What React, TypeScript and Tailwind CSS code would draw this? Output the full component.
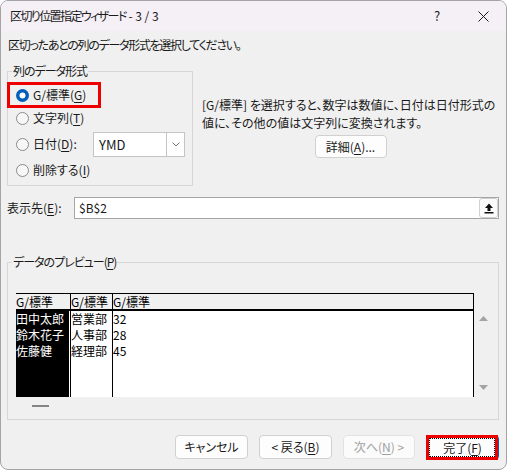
import React from 'react';

const Radio = ({ on }: { on?: boolean }) =>
  on ? (
    <svg width="13" height="13" viewBox="0 0 13 13" className="shrink-0">
      <circle cx="6.5" cy="6.5" r="6.5" fill="#005fb8" />
      <circle cx="6.5" cy="6.5" r="3" fill="#fff" />
    </svg>
  ) : (
    <svg width="13" height="13" viewBox="0 0 13 13" className="shrink-0">
      <circle cx="6.5" cy="6.5" r="6" fill="#f7f7f7" stroke="#8a8a8a" />
    </svg>
  );

const U = ({ children }: { children: React.ReactNode }) => (
  <span className="underline underline-offset-[2px]">{children}</span>
);

const App = () => {
  return (
    <div className="w-[507px] h-[470px] bg-white">
      <div className="w-[507px] h-[470px] flex flex-col overflow-hidden rounded-[8px] border border-[#a4a4a4] bg-[#f0f0f0] text-[12px] text-[#1a1a1a] font-['Noto_Sans_CJK_JP',sans-serif] [font-feature-settings:'palt']">
        {/* title bar */}
        <div className="h-[30px] shrink-0 flex items-center bg-[#f5eff6] pl-[9px]">
          <span className="leading-[16px] whitespace-pre">
            <span className="tracking-[-1.6px]">区切り位置指定ウィザード</span> - 3 / 3
          </span>
          <span className="ml-auto w-[46px] text-center text-[13px] leading-[16px]">?</span>
          <span className="w-[46px] flex justify-center">
            <svg width="11" height="11" viewBox="0 0 11 11">
              <path d="M0.5 0.5 L10.5 10.5 M10.5 0.5 L0.5 10.5" stroke="#1a1a1a" strokeWidth="1" />
            </svg>
          </span>
        </div>

        <div className="flex-1 flex flex-col pl-[6px] pr-[7px]">
          <div className="mt-[6px] ml-[1px] leading-[16px] tracking-[-1.3px]">区切ったあとの列のデータ形式を選択してください。</div>

          <div className="mt-[10px] flex">
            {/* column format group */}
            <fieldset className="w-[186px] border border-[#d6d6d6] pb-[5px]">
              <legend className="ml-[4px] px-[1px] leading-[16px] tracking-[-1px]">列のデータ形式</legend>
              <div className="mt-[3px] -ml-px w-[94px] h-[26px] border-[3px] border-[#ee0000] flex items-center gap-[4px] pl-[6px]">
                <Radio on />
                <span className="leading-[16px]">G/標準(<U>G</U>)</span>
              </div>
              <div className="h-[20px] flex items-center gap-[4px] pl-[8px]">
                <Radio />
                <span className="leading-[16px]">文字列(<U>T</U>)</span>
              </div>
              <div className="mt-[3px] h-[26px] flex items-center gap-[4px] pl-[8px] pr-[7px]">
                <Radio />
                <span className="leading-[16px]">日付(<U>D</U>):</span>
                <div className="ml-auto w-[92px] h-[25px] flex border border-[#c4c4c4] bg-white">
                  <span className="flex-1 pl-[5px] leading-[23px] text-[13px]">YMD</span>
                  <span className="w-[18px] flex items-center justify-center border-l border-[#c4c4c4]">
                    <svg width="8" height="5" viewBox="0 0 8 5">
                      <path d="M0.5 0.5 L4 4 L7.5 0.5" fill="none" stroke="#707070" strokeWidth="1" />
                    </svg>
                  </span>
                </div>
              </div>
              <div className="mt-[3px] h-[20px] flex items-center gap-[4px] pl-[8px]">
                <Radio />
                <span className="leading-[16px]">削除する(<U>I</U>)</span>
              </div>
            </fieldset>

            {/* description */}
            <div className="ml-[9px] flex-1 flex flex-col pt-[33px]">
              <span className="leading-[18px] whitespace-nowrap">[G/標準] を選択すると、数字は数値に、日付は日付形式の</span>
              <span className="leading-[18px] whitespace-nowrap">値に、その他の値は文字列に変換されます。</span>
              <button className="mt-[3px] self-center w-[72px] h-[23px] rounded-[4px] border border-[#d0d0d0] bg-[#fdfdfd] leading-[16px]">
                詳細(<U>A</U>)...
              </button>
            </div>
          </div>

          {/* destination */}
          <div className="mt-[11px] h-[22px] flex items-center">
            <span className="w-[67px] leading-[16px]">表示先(<U>E</U>):</span>
            <div className="flex-1 h-[22px] flex items-center border border-[#a6a6a6] bg-white">
              <span className="flex-1 pl-[4px] leading-[16px]">$B$2</span>
              <span className="w-[19px] h-[20px] flex items-center justify-center rounded-[3px] border border-[#cfcfcf] bg-[#fbfbfb]">
                <svg width="10" height="11" viewBox="0 0 10 11">
                  <path d="M5 0.5 L1 5 H3.5 V8 H6.5 V5 H9 Z" fill="#111" />
                  <rect x="0.5" y="9" width="9" height="1.5" fill="#111" />
                </svg>
              </span>
            </div>
          </div>

          {/* preview */}
          <fieldset className="mt-[35px] border border-[#d6d6d6] pb-[12px]">
            <legend className="ml-[4px] px-[1px] leading-[16px] tracking-[-1px]">データのプレビュー(<U>P</U>)</legend>
            <div className="mt-[23px] ml-[8px] flex font-['Noto_Sans_CJK_JP',monospace] [font-feature-settings:normal] text-[12px] text-black">
              <div className="w-[458px] flex flex-col">
                <div className="h-[18px] flex border-t border-b-2 border-black leading-[15px]">
                  <span className="w-[54px]">G/標準</span>
                  <span className="w-[42px] border-l border-black">G/標準</span>
                  <span className="flex-1 border-l border-r border-black">G/標準</span>
                </div>
                <div className="h-[86px] flex leading-[16px] bg-white">
                  <div className="w-[54px] flex flex-col bg-black text-white border-r border-white">
                    <span>田中太郎</span>
                    <span>鈴木花子</span>
                    <span>佐藤健</span>
                  </div>
                  <div className="w-[42px] flex flex-col border-l border-black">
                    <span>営業部</span>
                    <span>人事部</span>
                    <span>経理部</span>
                  </div>
                  <div className="flex-1 flex flex-col border-l border-r border-black">
                    <span>32</span>
                    <span>28</span>
                    <span>45</span>
                  </div>
                </div>
              </div>
              <div className="w-[18px] flex flex-col items-center">
                <svg width="9" height="5" viewBox="0 0 9 5" className="mt-[23px]">
                  <path d="M4.5 0 L9 5 H0 Z" fill="#a3a3a3" />
                </svg>
                <svg width="9" height="5" viewBox="0 0 9 5" className="mt-[64px]">
                  <path d="M0 0 H9 L4.5 5 Z" fill="#a3a3a3" />
                </svg>
              </div>
            </div>
            <div className="mt-[8px] ml-[24px] w-[17px] h-[2px] bg-[#858585]" />
          </fieldset>

          {/* buttons */}
          <div className="mt-[15px] flex justify-end gap-[11px]">
            <button className="w-[73px] h-[24px] rounded-[4px] border border-[#d0d0d0] bg-[#fdfdfd] leading-[16px]">キャンセル</button>
            <button className="w-[73px] h-[24px] rounded-[4px] border border-[#d0d0d0] bg-[#fdfdfd] leading-[16px]">
              &lt; 戻る(<U>B</U>)
            </button>
            <button className="w-[72px] h-[24px] rounded-[4px] border border-[#e2e2e2] bg-[#fbfbfb] text-[#a0a0a0] leading-[16px]">
              次へ(<U>N</U>) &gt;
            </button>
            <div className="relative w-[73px] h-[25px] rounded-[4px] border border-[#005fb8] bg-[#fdfdfd] flex items-center justify-center">
              <span className="leading-[16px]">完了(<U>F</U>)</span>
              <div className="absolute -left-px -top-px -bottom-px right-0 border-[3px] border-[#ee0000]">
                <div className="h-full border border-dotted border-black" />
              </div>
            </div>
          </div>
        </div>
      </div>
    </div>
  );
};

export default App;
